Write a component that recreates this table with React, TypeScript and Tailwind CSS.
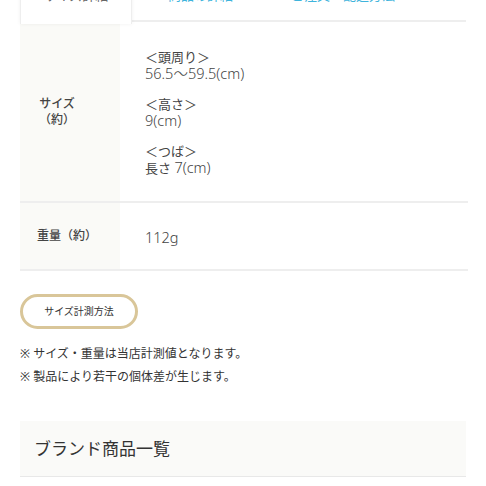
export default function App() {
  const font = { fontFamily: '"Noto Sans", "Noto Sans CJK JP", sans-serif' };
  const L = "text-[14.5px] font-light";
  return (
    <div className="w-[486px] h-[486px] overflow-hidden bg-white text-[#333]" style={font}>
      <div className="px-5">
        {/* tabs */}
        <div className="flex mt-[-22px] h-[44px]">
          <div className="w-[112px] h-[46px] bg-white border border-[#eeeeee] border-b-0 rounded-t-md shadow-[0_0_4px_rgba(0,0,0,0.06)] flex items-start justify-center pt-[7px] text-[13px] text-[#666] z-10">
            サイズ詳細
          </div>
          <div className="flex-1 flex items-start pt-[8px] border-b-2 border-[#eeeeee] text-[13px] text-[#3fb4dc]">
            <span className="ml-[36px]">商品の詳細</span>
            <span className="ml-[58px]">ご注文・配送方法</span>
          </div>
        </div>
        {/* table */}
        <div className="flex border-b-2 border-[#eeeeee] w-[448px]">
          <div className="w-[100px] bg-[#fafaf7] flex items-center pl-[19px] text-[12px] font-medium leading-[16px] text-[#444]">
            <div className="flex flex-col items-center">
              <span>サイズ</span>
              <span>（約）</span>
            </div>
          </div>
          <div className="flex-1 pl-[25px] pt-[27px] pb-[25px] text-[13px] leading-[16px] text-[#444]">
            <div>＜頭周り＞</div>
            <div className={L}>56.5〜59.5(cm)</div>
            <div className="mt-[15px]">＜高さ＞</div>
            <div className={L}>9(cm)</div>
            <div className="mt-[15px]">＜つば＞</div>
            <div>長さ <span className={L}>7(cm)</span></div>
          </div>
        </div>
        <div className="flex border-b-2 border-[#eeeeee] w-[448px] h-[68px]">
          <div className="w-[100px] bg-[#fafaf7] flex items-center pl-[17px] text-[12px] font-medium text-[#444]">
            重量（約）
          </div>
          <div className={"flex-1 flex items-center pl-[25px] pt-[3px] text-[#444] " + L}>112g</div>
        </div>
        {/* button */}
        <div className="mt-[23px] w-[118px] h-[35px] rounded-full border-[3px] border-[#d9c699] flex items-center justify-center text-[10px] text-[#333]">
          サイズ計測方法
        </div>
        <div className="mt-[13px] text-[12px] leading-[23px] text-[#333]">
          <div>※ サイズ・重量は当店計測値となります。</div>
          <div>※ 製品により若干の個体差が生じます。</div>
        </div>
        <div className="mt-[33px] h-[56px] bg-[#fafaf8] border-b border-[#e8e8e8] flex items-center pl-[14px] text-[17px] text-[#333]">
          ブランド商品一覧
        </div>
      </div>
    </div>
  );
}
